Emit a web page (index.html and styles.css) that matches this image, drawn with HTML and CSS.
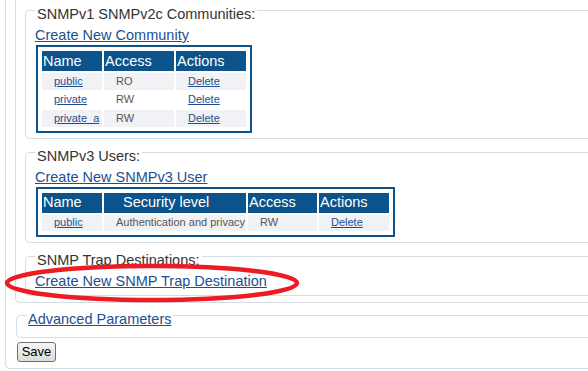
FILE: index.html
```html
<!DOCTYPE html>
<html lang="en">
<head>
    <meta charset="UTF-8">
    <title>SNMP</title>
    <link rel="stylesheet" href="styles.css">
</head>
<body>
<div class="outer">
    <div class="group">
        <fieldset class="box">
            <legend>SNMPv1 SNMPv2c Communities:</legend>
            <a href="#" class="create">Create New Community</a>
            <table class="grid">
                <tr>
                    <th class="w-name">Name</th>
                    <th class="w-access">Access</th>
                    <th class="w-act">Actions</th>
                </tr>
                <tr class="odd">
                    <td><a href="#">public</a></td>
                    <td>RO</td>
                    <td><a href="#">Delete</a></td>
                </tr>
                <tr>
                    <td><a href="#">private</a></td>
                    <td>RW</td>
                    <td><a href="#">Delete</a></td>
                </tr>
                <tr class="odd">
                    <td><a href="#">private_a</a></td>
                    <td>RW</td>
                    <td><a href="#">Delete</a></td>
                </tr>
            </table>
        </fieldset>
        <fieldset class="box">
            <legend>SNMPv3 Users:</legend>
            <a href="#" class="create">Create New SNMPv3 User</a>
            <table class="grid">
                <tr>
                    <th class="w-name">Name</th>
                    <th class="w-level">Security level</th>
                    <th class="w-access2">Access</th>
                    <th class="w-act">Actions</th>
                </tr>
                <tr class="odd">
                    <td><a href="#">public</a></td>
                    <td>Authentication and privacy</td>
                    <td>RW</td>
                    <td><a href="#">Delete</a></td>
                </tr>
            </table>
        </fieldset>
        <fieldset class="box">
            <legend>SNMP Trap Destinations:</legend>
            <a href="#" class="create">Create New SNMP Trap Destination</a>
        </fieldset>
    </div>
    <fieldset class="box adv">
        <legend><a href="#">Advanced Parameters</a></legend>
    </fieldset>
    <button class="save" type="button">Save</button>
</div>
<svg class="mark" width="306" height="46" viewBox="0 0 306 46">
    <ellipse cx="152" cy="23" rx="145" ry="17" fill="none" stroke="#ec1c24" stroke-width="4.5"/>
</svg>
</body>
</html>
```
FILE: styles.css
```css
/* reset */
html,body{margin:0;padding:0;overflow:hidden}
body{font-family:'Liberation Sans',Arial,sans-serif;font-size:14.5px;line-height:17px;color:#333;background:#fff}
a{color:#1d4f91;text-decoration:underline}
/* //reset */

.outer{
    margin-left:5px;
    padding:0 0 6px 9px;
    border:1px solid #d3dbe3;
    border-top:0 none;
    border-right:0 none;
    border-radius:0 0 0 5px;
}
.group{
    margin-top:-2px;
    padding:0 0 6px 9px;
    border:1px solid #d3dbe3;
    border-top:0 none;
    border-right:0 none;
    border-radius:0 0 0 5px;
}
.box{
    min-width:0;
    margin:0 0 1px;
    padding:4px 0 5px 9px;
    border:1px solid #d3dbe3;
    border-right:0 none;
    border-radius:5px 0 0 5px;
}
.box:last-child{
    margin-bottom:0;
}
.box legend{
    padding:8px 2px 0;
    color:#333;
}
.create{
    display:block;
    width:max-content;
}
.grid{
    margin:1px 0 0 1px;
    padding:2px;
    border:2px solid #0b538a;
    border-spacing:2px;
}
.grid th{
    box-sizing:border-box;
    height:20px;
    padding:0 0 0 1px;
    background:#0b538a;
    color:#fff;
    font-weight:normal;
    text-align:left;
    white-space:nowrap;
}
.grid td{
    box-sizing:border-box;
    height:16.5px;
    padding:0 0 0 12px;
    color:#555;
    font-size:11px;
    line-height:13px;
    white-space:nowrap;
}
.grid .odd td{
    background:#f0f2f5;
}
.w-name{width:60px}
.w-access{width:70px}
.w-act{width:70px}
.w-access2{width:69px}
.grid .w-level{width:142px;padding-left:19px}
.adv{
    margin:0 0 0 1px;
}
.save{
    display:block;
    width:39px;
    height:20px;
    margin:4px 0 0 2px;
    padding:0;
    border:1px solid #707070;
    border-radius:3px;
    background:linear-gradient(#f6f6f6,#dcdcdc);
    color:#000;
    font-family:'Liberation Sans',Arial,sans-serif;
    font-size:13px;
    line-height:18px;
}
.mark{
    position:absolute;
    left:0;
    top:260px;
}
```
